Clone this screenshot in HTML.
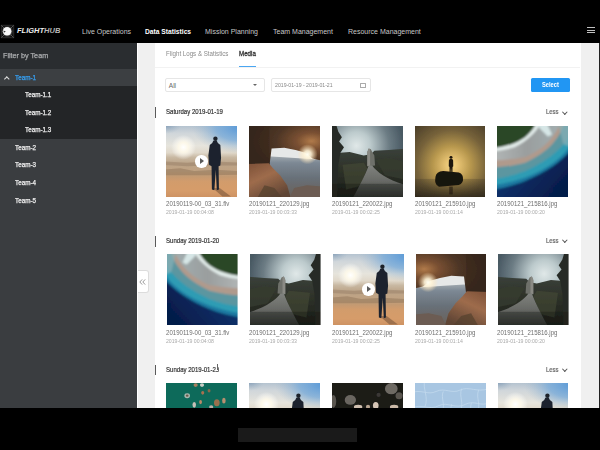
<!DOCTYPE html>
<html><head><meta charset="utf-8">
<style>
*{margin:0;padding:0;box-sizing:border-box}
html,body{width:600px;height:450px;overflow:hidden;background:#000;font-family:"Liberation Sans",sans-serif}
.a{position:absolute;white-space:nowrap}
#hdr{position:absolute;left:0;top:0;width:600px;height:43px;background:#000}
.nav{position:absolute;top:27px;font-size:7px;color:#c8c8c8;line-height:9px;white-space:nowrap}
#side{position:absolute;left:0;top:43px;width:137px;height:365px;background:#3a3d40}
.row{position:absolute;left:0;width:137px;font-size:7px;color:#eeeeee;line-height:17.6px;white-space:nowrap;-webkit-text-stroke:0.25px currentColor}
.sx{display:inline-block;transform-origin:0 50%}
#main{position:absolute;left:137px;top:43px;width:463px;height:365px;background:#f0f0f0;overflow:hidden}
#panel{position:absolute;left:18px;top:0;width:425.6px;height:365px;background:#fff;overflow:hidden}
.th{position:absolute;width:70.6px;height:70.5px;overflow:hidden}
.th svg{position:absolute;left:0;top:0;display:block}
.fn{position:absolute;font-size:6.4px;color:#6e6e6e;line-height:8px;white-space:nowrap;transform:scaleX(.95);transform-origin:0 50%}
.dt{position:absolute;font-size:5.8px;color:#aaa;line-height:7px;white-space:nowrap;transform:scaleX(.89);transform-origin:0 50%}
.sec{position:absolute;font-size:7.3px;color:#333;line-height:8px;white-space:nowrap;-webkit-text-stroke:0.2px #333;transform:scaleX(.83);transform-origin:0 50%}
.bar{position:absolute;left:-0.3px;width:1.3px;height:10.6px;background:#5a5a5a}
.less{position:absolute;left:391px;font-size:6.6px;color:#666;line-height:8px;-webkit-text-stroke:0.2px #666;transform:scaleX(.9);transform-origin:0 50%}
.chev{left:407.6px;width:3.6px;height:3.6px;border-right:1px solid #555;border-bottom:1px solid #555;transform:rotate(45deg)}
.play{position:absolute;left:50%;top:50%;width:12.5px;height:12.5px;margin:-6.25px 0 0 -6.25px;border-radius:50%;background:#fff}
.play:after{content:"";position:absolute;left:5px;top:3.25px;border-left:4.2px solid #5a5a5a;border-top:3px solid transparent;border-bottom:3px solid transparent}
</style></head><body>
<div id="hdr">
  <svg class="a" style="left:0;top:24px" width="15" height="15" viewBox="0 0 15 15"><defs><filter id="lgb" x="-20%" y="-20%" width="140%" height="140%"><feGaussianBlur stdDeviation="0.6"/></filter><radialGradient id="lgg"><stop offset="0" stop-color="#777"/><stop offset=".6" stop-color="#3a3a3a"/><stop offset="1" stop-color="#000" stop-opacity="0"/></radialGradient></defs><g filter="url(#lgb)"><rect x="0" y="0" width="15" height="15" fill="url(#lgg)"/><rect x="1.3" y="1.3" width="12.4" height="12.4" fill="none" stroke="#2e2e2e" stroke-width="1"/><path d="M1.5,1.5 L13.5,13.5 M13.5,1.5 L1.5,13.5" stroke="#666" stroke-width="0.8"/><circle cx="7.1" cy="7.3" r="4.3" fill="#f8f8f8"/><path d="M3.4,6.6 L5.8,7.6 L3.9,8.8 Z" fill="#333"/></g></svg>
  <div class="a" style="left:17px;top:26px;font-size:7.5px;font-style:italic;font-weight:bold;color:#eeeeee;line-height:10px">FLIGHT<span style="color:#b8b8b8">HUB</span></div>
  <div class="nav" style="left:82px">Live Operations</div>
  <div class="nav" style="left:145px;color:#fff;font-weight:bold;font-size:6.7px">Data Statistics</div>
  <div class="nav" style="left:205px">Mission Planning</div>
  <div class="nav" style="left:273px">Team Management</div>
  <div class="nav" style="left:348px">Resource Management</div>
  <div class="a" style="left:586.8px;top:27px;width:8px;height:1px;background:#c0c0c0"></div>
  <div class="a" style="left:586.8px;top:29.7px;width:8px;height:1px;background:#c0c0c0"></div>
  <div class="a" style="left:586.8px;top:32.4px;width:8px;height:1px;background:#c0c0c0"></div>
</div>
<div id="side">
  <div class="row" style="top:0;height:26px;background:#2a2d30;line-height:26px;font-size:7px;color:#a8aaac;padding-left:2.5px"><span class="sx" style="transform:scaleX(1.03)">Filter by Team</span></div>
  <div class="row" style="top:26px;height:17px;background:#3c3f42;line-height:17px;color:#36a0f4;padding-left:15px"><span class="sx" style="transform:scaleX(.9)">Team-1</span></div>
  <div class="a" style="left:4.6px;top:33.6px;width:3.6px;height:3.6px;border-left:1px solid #e0e0e0;border-top:1px solid #e0e0e0;transform:rotate(45deg)"></div>
  <div class="a" style="left:0;top:43px;width:137px;height:53px;background:#232527"></div>
  <div class="row" style="top:43px;padding-left:25px"><span class="sx" style="transform:scaleX(.9)">Team-1.1</span></div>
  <div class="row" style="top:60.6px;padding-left:25px"><span class="sx" style="transform:scaleX(.9)">Team-1.2</span></div>
  <div class="row" style="top:78.2px;padding-left:25px"><span class="sx" style="transform:scaleX(.9)">Team-1.3</span></div>
  <div class="row" style="top:95.8px;padding-left:15px"><span class="sx" style="transform:scaleX(.9)">Team-2</span></div>
  <div class="row" style="top:113.4px;padding-left:15px"><span class="sx" style="transform:scaleX(.9)">Team-3</span></div>
  <div class="row" style="top:131px;padding-left:15px"><span class="sx" style="transform:scaleX(.9)">Team-4</span></div>
  <div class="row" style="top:148.6px;padding-left:15px"><span class="sx" style="transform:scaleX(.9)">Team-5</span></div>
</div>
<div id="main">
  <div class="a" style="left:0;top:0;width:1px;height:365px;background:#fff"></div>
  <div id="panel">
    <div class="a" style="left:10.5px;top:6.8px;font-size:6.5px;color:#8a8a8a;line-height:8px;transform:scaleX(.95);transform-origin:0 50%">Flight Logs &amp; Statistics</div>
    <div class="a" style="left:83.8px;top:6.8px;font-size:6.5px;color:#333;line-height:8px;-webkit-text-stroke:0.3px #333;transform:scaleX(.95);transform-origin:0 50%">Media</div>
    <div class="a" style="left:83.8px;top:23px;width:17px;height:1.5px;background:#4aa6f2"></div>
    <div class="a" style="left:0;top:24.3px;width:425px;height:1px;background:#f2f2f2"></div>
    <div class="a" style="left:10px;top:35.2px;width:99.5px;height:14.3px;border:1px solid #e6e6e6;border-radius:2px"></div>
    <div class="a" style="left:13.8px;top:38.6px;font-size:6.5px;color:#666;line-height:8px">All</div>
    <div class="a" style="left:98px;top:41px;width:0;height:0;border-left:2.6px solid transparent;border-right:2.6px solid transparent;border-top:2.8px solid #666"></div>
    <div class="a" style="left:116px;top:35.2px;width:99.5px;height:14.3px;border:1px solid #e6e6e6;border-radius:2px"></div>
    <div class="a" style="left:120px;top:38.8px;font-size:5.9px;color:#888;line-height:7px;transform:scaleX(.88);transform-origin:0 50%">2019-01-19 - 2019-01-21</div>
    <div class="a" style="left:205.3px;top:40.2px;width:6px;height:5px;border:0.7px solid #aaa;border-top-width:1.3px;border-radius:0.5px"></div>
    <div class="a" style="left:376px;top:35.3px;width:38.7px;height:13.7px;background:#2196f3;border-radius:1.5px;color:#fff;font-weight:bold;font-size:6.4px;line-height:14px;text-align:center"><span class="sx" style="transform:scaleX(.9);transform-origin:50% 50%">Select</span></div>
<div class="bar" style="top:64.2px"></div>
<div class="sec" style="left:11px;top:65.2px">Saturday 2019-01-19</div>
<div class="less" style="top:65.4px">Less</div>
<div class="a chev" style="top:66.5px"></div>
<div class="th" style="left:11px;top:83px"><svg width="70.6" height="70.5" viewBox="0 0 100 100" preserveAspectRatio="none"><defs><filter id="g1f" x="-5%" y="-5%" width="110%" height="110%"><feGaussianBlur stdDeviation="0.45"/></filter></defs><g filter="url(#g1f)">
<defs>
<linearGradient id="g1bg" x1="0" y1="0" x2="0" y2="1">
 <stop offset="0" stop-color="#a8bacb"/>
 <stop offset=".14" stop-color="#d0d6da"/>
 <stop offset=".3" stop-color="#e6e4dc"/>
 <stop offset=".39" stop-color="#e0d8ca"/>
 <stop offset=".45" stop-color="#c8b8a2"/>
 <stop offset=".53" stop-color="#bca488"/>
 <stop offset=".63" stop-color="#c0a282"/>
 <stop offset=".7" stop-color="#c49a72"/>
 <stop offset=".76" stop-color="#d29c6c"/>
 <stop offset=".88" stop-color="#d69c6a"/>
 <stop offset="1" stop-color="#ca8e60"/>
</linearGradient>
<radialGradient id="g1sun" cx=".27" cy=".32" r=".16">
 <stop offset="0" stop-color="#ffffff"/>
 <stop offset=".4" stop-color="#fffaea" stop-opacity=".9"/>
 <stop offset="1" stop-color="#fff" stop-opacity="0"/>
</radialGradient>
<radialGradient id="g1blue" cx="1" cy=".12" r=".62">
 <stop offset="0" stop-color="#5a9ad8"/>
 <stop offset=".5" stop-color="#78aad8" stop-opacity=".8"/>
 <stop offset="1" stop-color="#a0b8cc" stop-opacity="0"/>
</radialGradient>
<radialGradient id="g1cl" cx=".1" cy=".05" r=".35">
 <stop offset="0" stop-color="#7e98b4"/>
 <stop offset="1" stop-color="#a0b4c4" stop-opacity="0"/>
</radialGradient>
</defs>
<rect x="-5" y="-5" width="110" height="110" fill="url(#g1bg)"/>
<rect x="-5" y="-5" width="110" height="60" fill="url(#g1blue)"/>
<rect x="-5" y="-5" width="60" height="40" fill="url(#g1cl)"/>
<rect x="-5" y="-5" width="110" height="110" fill="url(#g1sun)"/>
<path d="M-5,50 L30,52 L60,50 L105,52 L105,56 L60,56 L30,57 L-5,55 Z" fill="#8e765e" opacity=".4"/>
<path d="M-5,62 L20,60 L40,64 L70,62 L105,64 L105,69 L60,70 L-5,70 Z" fill="#8a6e54" opacity=".45"/>
<path d="M66,88 L80,100 L92,100 L76,88 Z" fill="#6a4a34" opacity=".5"/>
<circle cx="70" cy="18" r="3.1" fill="#1e232c"/>
<path d="M67,21 L72,21 L73.5,24 L77,27 L78,45 L77,56 L74.5,57 L75,90 L72,91 L70.5,62 L68.5,91 L65,90 L64.5,57 L61,55 L60,42 L62,27 L65.5,24 Z" fill="#1e242e"/>
</g></svg><div class="play"></div></div>
<div class="th" style="left:94px;top:83px"><svg width="70.6" height="70.5" viewBox="0 0 100 100" preserveAspectRatio="none"><defs><filter id="g2f" x="-5%" y="-5%" width="110%" height="110%"><feGaussianBlur stdDeviation="0.6"/></filter></defs><g filter="url(#g2f)">
<defs>
<radialGradient id="g2rock" cx=".85" cy=".42" r=".75">
 <stop offset="0" stop-color="#b07a4a"/>
 <stop offset=".25" stop-color="#7a5032"/>
 <stop offset=".6" stop-color="#4e3626"/>
 <stop offset="1" stop-color="#38281c"/>
</radialGradient>
<linearGradient id="g2city" x1="0" y1="0" x2="0" y2="1">
 <stop offset="0" stop-color="#a0a8ae"/>
 <stop offset=".15" stop-color="#7c8894"/>
 <stop offset=".5" stop-color="#687078"/>
 <stop offset="1" stop-color="#6a5e54"/>
</linearGradient>
<linearGradient id="g2bl" x1="0" y1="0" x2=".6" y2="1">
 <stop offset="0" stop-color="#7a4e36"/>
 <stop offset=".45" stop-color="#9e6c4c"/>
 <stop offset="1" stop-color="#5e4434"/>
</linearGradient>
<radialGradient id="g2sun" cx=".8" cy=".41" r=".13">
 <stop offset="0" stop-color="#fffef2"/>
 <stop offset=".35" stop-color="#fff4d8" stop-opacity=".9"/>
 <stop offset="1" stop-color="#ffe0b0" stop-opacity="0"/>
</radialGradient>
</defs>
<rect x="-5" y="-5" width="110" height="110" fill="#3e2c20"/>
<path d="M26,28 L105,28 L105,50 L26,46 Z" fill="#e6e8e8"/>
<path d="M26,43 L60,45 L105,48 L105,105 L26,105 Z" fill="url(#g2city)"/>
<path d="M-5,-5 L105,-5 L105,49 L97,48 L90,46 L80,38 L66,34 L50,31 L32,32 L29,56 L-5,58 Z" fill="url(#g2rock)"/>
<path d="M-5,-5 L29,-5 L29,56 L-5,58 Z" fill="#35261c" opacity=".45"/>
<path d="M-5,54 L28,53 L34,60 L44,70 L54,84 L60,105 L-5,105 Z" fill="url(#g2bl)"/>
<path d="M56,105 L64,88 L82,84 L105,86 L105,105 Z" fill="#6c5c52"/>
<path d="M10,105 L22,84 L36,88 L50,105 Z" fill="#54402e" opacity=".7"/>
<rect x="-5" y="-5" width="110" height="110" fill="url(#g2sun)"/>
</g></svg></div>
<div class="th" style="left:177px;top:83px"><svg width="70.6" height="70.5" viewBox="0 0 100 100" preserveAspectRatio="none"><defs><filter id="g3f" x="-5%" y="-5%" width="110%" height="110%"><feGaussianBlur stdDeviation="0.6"/></filter></defs><g filter="url(#g3f)">
<defs>
<radialGradient id="g3sky" cx=".36" cy=".3" r=".6">
 <stop offset="0" stop-color="#e0e8e8"/>
 <stop offset=".3" stop-color="#bccacc"/>
 <stop offset=".7" stop-color="#6c7c84"/>
 <stop offset="1" stop-color="#4a5a64"/>
</radialGradient>
<linearGradient id="g3land" x1="0" y1="0" x2="0" y2="1">
 <stop offset="0" stop-color="#3a403a"/>
 <stop offset=".4" stop-color="#2e3229"/>
 <stop offset="1" stop-color="#1a1c18"/>
</linearGradient>
<linearGradient id="g3road" x1="0" y1="0" x2="0" y2="1">
 <stop offset="0" stop-color="#80827e"/>
 <stop offset=".45" stop-color="#686a66"/>
 <stop offset="1" stop-color="#2e302e"/>
</linearGradient>
</defs>
<rect x="-5" y="-5" width="110" height="110" fill="url(#g3sky)"/>
<path d="M-5,40 L12,38 L25,37 L45,42 L55,40 L60,35 L80,34 L105,32 L105,105 L-5,105 Z" fill="url(#g3land)"/>
<path d="M15,55 L45,52 L50,60 L40,85 L20,90 Z" fill="#4a5038" opacity=".5"/>
<path d="M62,48 L80,45 L100,50 L100,75 L75,70 Z" fill="#363c30" opacity=".8"/>
<path d="M50,37 L52,32 L55,33 L57,37 L60,42 L61,56 L50,57 Z" fill="#6e706a"/><path d="M50,37 L52,32 L54,33 L54,56 L50,57 Z" fill="#8a8a84"/>
<path d="M52,56 L57,56 C63,65 78,76 105,84 L105,105 L28,105 C36,90 46,72 52,56 Z" fill="url(#g3road)"/>
<path d="M-5,-5 L5,-5 L9,8 L14,16 L10,22 L17,30 L12,38 L9,55 L7,105 L-5,105 Z" fill="#282c26"/>
<rect x="-5" y="82" width="110" height="24" fill="#141612" opacity=".35"/>
</g></svg></div>
<div class="th" style="left:259.6px;top:83px"><svg width="70.6" height="70.5" viewBox="0 0 100 100" preserveAspectRatio="none"><defs><filter id="g4f" x="-5%" y="-5%" width="110%" height="110%"><feGaussianBlur stdDeviation="0.55"/></filter></defs><g filter="url(#g4f)">
<defs>
<radialGradient id="g4glow" cx=".52" cy=".55" r=".75">
 <stop offset="0" stop-color="#f6d888"/>
 <stop offset=".12" stop-color="#e4c070"/>
 <stop offset=".32" stop-color="#b8984e"/>
 <stop offset=".6" stop-color="#76623a"/>
 <stop offset="1" stop-color="#3e3424"/>
</radialGradient>
<linearGradient id="g4water" x1="0" y1="0" x2="0" y2="1">
 <stop offset="0" stop-color="#3a3222" stop-opacity=".25"/>
 <stop offset="1" stop-color="#221e16" stop-opacity=".9"/>
</linearGradient>
</defs>
<rect x="-5" y="-5" width="110" height="110" fill="url(#g4glow)"/>
<rect x="-5" y="75" width="110" height="31" fill="url(#g4water)"/>
<circle cx="51" cy="44.5" r="2.1" fill="#1c160e"/>
<path d="M49.3,46.5 L52.7,46.5 L54,49 L54.2,57 L53.2,58 L53,67 L51.6,67 L51,59 L50.4,67 L49,67 L48.8,58 L47.8,57 L48,49 Z" fill="#1c160e"/>
<path d="M29,72 Q30,65 40,64 L62,66 Q69,68 68,77 Q67,84 58,84 L34,86 Q27,84 29,72 Z" fill="#19130c"/>
<rect x="48.5" y="86" width="5" height="11" fill="#19130c" opacity=".55"/>
</g></svg></div>
<div class="th" style="left:342.2px;top:83px"><svg width="70.6" height="70.5" viewBox="0 0 100 100" preserveAspectRatio="none"><defs><filter id="g5f" x="-5%" y="-5%" width="110%" height="110%"><feGaussianBlur stdDeviation="1.4"/></filter></defs><g filter="url(#g5f)">
<defs>
<linearGradient id="g5sea" x1="0" y1=".3" x2=".8" y2="1">
 <stop offset="0" stop-color="#10488a"/>
 <stop offset=".4" stop-color="#0a3068"/>
 <stop offset="1" stop-color="#061a48"/>
</linearGradient>
<linearGradient id="g5rk" x1="0" y1="0" x2="1" y2="0">
 <stop offset="0" stop-color="#b2b6b6"/>
 <stop offset=".5" stop-color="#9a9e9e"/>
 <stop offset="1" stop-color="#a2aeb0"/>
</linearGradient>
</defs>
<rect x="-5" y="-5" width="110" height="110" fill="url(#g5sea)"/>
<path d="M-5,-5 L105,-5 L105,34 C92,50 70,66 40,78 C25,84 10,88 -5,90 Z" fill="#1a78a0"/>
<path d="M-5,-5 L105,-5 L105,26 C94,44 74,60 40,73 C25,78 10,82 -5,84 Z" fill="#2e9cb4"/>
<path d="M-5,-5 L105,-5 L105,8 C96,28 78,46 40,64 C25,70 10,73 -5,75 Z" fill="#5c96a0"/>
<path d="M-5,-5 L95,-5 C90,15 75,36 40,52 C25,56 10,58 -5,59 Z" fill="#b09a8c"/>
<path d="M-5,-5 L89,-5 C85,10 72,30 40,44 C25,47 10,48 -5,49 Z" fill="url(#g5rk)"/>
<path d="M-5,-5 L63,-5 C56,8 45,20 25,30 C15,33 5,35 -5,36 Z" fill="#e2ecea"/>
<path d="M-5,-5 L56,-5 C50,8 40,18 25,24 C15,28 5,30 -5,31 Z" fill="#2c4628"/>
<path d="M56,-5 L70,-5 L78,12 L72,15 L61,4 Z" fill="#d6e6e6"/>
<path d="M86,-5 L105,-5 L105,30 L94,26 Z" fill="#8ab0b6" opacity=".7"/>
</g></svg></div>
<div class="fn" style="left:11px;top:156.7px">20190119-00_03_31.flv</div>
<div class="dt" style="left:11px;top:165.7px">2019-01-19 00:04:08</div>
<div class="fn" style="left:94px;top:156.7px">20190121_220129.jpg</div>
<div class="dt" style="left:94px;top:165.7px">2019-01-19 00:03:33</div>
<div class="fn" style="left:177px;top:156.7px">20190121_220022.jpg</div>
<div class="dt" style="left:177px;top:165.7px">2019-01-19 00:02:25</div>
<div class="fn" style="left:259.6px;top:156.7px">20190121_215910.jpg</div>
<div class="dt" style="left:259.6px;top:165.7px">2019-01-19 00:01:14</div>
<div class="fn" style="left:342.2px;top:156.7px">20190121_215816.jpg</div>
<div class="dt" style="left:342.2px;top:165.7px">2019-01-19 00:00:20</div>
<div class="bar" style="top:193px"></div>
<div class="sec" style="left:11px;top:194px">Sunday 2019-01-20</div>
<div class="less" style="top:194.2px">Less</div>
<div class="a chev" style="top:195.3px"></div>
<div class="th" style="left:12px;top:211px"><svg width="70.6" height="70.5" viewBox="0 0 100 100" preserveAspectRatio="none" style="transform:scaleX(-1)"><defs><filter id="g6f" x="-5%" y="-5%" width="110%" height="110%"><feGaussianBlur stdDeviation="1.4"/></filter></defs><g filter="url(#g6f)">
<defs>
<linearGradient id="g6sea" x1="0" y1=".3" x2=".8" y2="1">
 <stop offset="0" stop-color="#10488a"/>
 <stop offset=".4" stop-color="#0a3068"/>
 <stop offset="1" stop-color="#061a48"/>
</linearGradient>
<linearGradient id="g6rk" x1="0" y1="0" x2="1" y2="0">
 <stop offset="0" stop-color="#b2b6b6"/>
 <stop offset=".5" stop-color="#9a9e9e"/>
 <stop offset="1" stop-color="#a2aeb0"/>
</linearGradient>
</defs>
<rect x="-5" y="-5" width="110" height="110" fill="url(#g6sea)"/>
<path d="M-5,-5 L105,-5 L105,34 C92,50 70,66 40,78 C25,84 10,88 -5,90 Z" fill="#1a78a0"/>
<path d="M-5,-5 L105,-5 L105,26 C94,44 74,60 40,73 C25,78 10,82 -5,84 Z" fill="#2e9cb4"/>
<path d="M-5,-5 L105,-5 L105,8 C96,28 78,46 40,64 C25,70 10,73 -5,75 Z" fill="#5c96a0"/>
<path d="M-5,-5 L95,-5 C90,15 75,36 40,52 C25,56 10,58 -5,59 Z" fill="#b09a8c"/>
<path d="M-5,-5 L89,-5 C85,10 72,30 40,44 C25,47 10,48 -5,49 Z" fill="url(#g6rk)"/>
<path d="M-5,-5 L63,-5 C56,8 45,20 25,30 C15,33 5,35 -5,36 Z" fill="#e2ecea"/>
<path d="M-5,-5 L56,-5 C50,8 40,18 25,24 C15,28 5,30 -5,31 Z" fill="#2c4628"/>
<path d="M56,-5 L70,-5 L78,12 L72,15 L61,4 Z" fill="#d6e6e6"/>
<path d="M86,-5 L105,-5 L105,30 L94,26 Z" fill="#8ab0b6" opacity=".7"/>
</g></svg></div>
<div class="th" style="left:95px;top:211px"><svg width="70.6" height="70.5" viewBox="0 0 100 100" preserveAspectRatio="none" style="transform:scaleX(-1)"><defs><filter id="g7f" x="-5%" y="-5%" width="110%" height="110%"><feGaussianBlur stdDeviation="0.6"/></filter></defs><g filter="url(#g7f)">
<defs>
<radialGradient id="g7sky" cx=".36" cy=".3" r=".6">
 <stop offset="0" stop-color="#e0e8e8"/>
 <stop offset=".3" stop-color="#bccacc"/>
 <stop offset=".7" stop-color="#6c7c84"/>
 <stop offset="1" stop-color="#4a5a64"/>
</radialGradient>
<linearGradient id="g7land" x1="0" y1="0" x2="0" y2="1">
 <stop offset="0" stop-color="#3a403a"/>
 <stop offset=".4" stop-color="#2e3229"/>
 <stop offset="1" stop-color="#1a1c18"/>
</linearGradient>
<linearGradient id="g7road" x1="0" y1="0" x2="0" y2="1">
 <stop offset="0" stop-color="#80827e"/>
 <stop offset=".45" stop-color="#686a66"/>
 <stop offset="1" stop-color="#2e302e"/>
</linearGradient>
</defs>
<rect x="-5" y="-5" width="110" height="110" fill="url(#g7sky)"/>
<path d="M-5,40 L12,38 L25,37 L45,42 L55,40 L60,35 L80,34 L105,32 L105,105 L-5,105 Z" fill="url(#g7land)"/>
<path d="M15,55 L45,52 L50,60 L40,85 L20,90 Z" fill="#4a5038" opacity=".5"/>
<path d="M62,48 L80,45 L100,50 L100,75 L75,70 Z" fill="#363c30" opacity=".8"/>
<path d="M50,37 L52,32 L55,33 L57,37 L60,42 L61,56 L50,57 Z" fill="#6e706a"/><path d="M50,37 L52,32 L54,33 L54,56 L50,57 Z" fill="#8a8a84"/>
<path d="M52,56 L57,56 C63,65 78,76 105,84 L105,105 L28,105 C36,90 46,72 52,56 Z" fill="url(#g7road)"/>
<path d="M-5,-5 L5,-5 L9,8 L14,16 L10,22 L17,30 L12,38 L9,55 L7,105 L-5,105 Z" fill="#282c26"/>
<rect x="-5" y="82" width="110" height="24" fill="#141612" opacity=".35"/>
</g></svg></div>
<div class="th" style="left:178px;top:211px"><svg width="70.6" height="70.5" viewBox="0 0 100 100" preserveAspectRatio="none"><defs><filter id="g8f" x="-5%" y="-5%" width="110%" height="110%"><feGaussianBlur stdDeviation="0.45"/></filter></defs><g filter="url(#g8f)">
<defs>
<linearGradient id="g8bg" x1="0" y1="0" x2="0" y2="1">
 <stop offset="0" stop-color="#a8bacb"/>
 <stop offset=".14" stop-color="#d0d6da"/>
 <stop offset=".3" stop-color="#e6e4dc"/>
 <stop offset=".39" stop-color="#e0d8ca"/>
 <stop offset=".45" stop-color="#c8b8a2"/>
 <stop offset=".53" stop-color="#bca488"/>
 <stop offset=".63" stop-color="#c0a282"/>
 <stop offset=".7" stop-color="#c49a72"/>
 <stop offset=".76" stop-color="#d29c6c"/>
 <stop offset=".88" stop-color="#d69c6a"/>
 <stop offset="1" stop-color="#ca8e60"/>
</linearGradient>
<radialGradient id="g8sun" cx=".27" cy=".32" r=".16">
 <stop offset="0" stop-color="#ffffff"/>
 <stop offset=".4" stop-color="#fffaea" stop-opacity=".9"/>
 <stop offset="1" stop-color="#fff" stop-opacity="0"/>
</radialGradient>
<radialGradient id="g8blue" cx="1" cy=".12" r=".62">
 <stop offset="0" stop-color="#5a9ad8"/>
 <stop offset=".5" stop-color="#78aad8" stop-opacity=".8"/>
 <stop offset="1" stop-color="#a0b8cc" stop-opacity="0"/>
</radialGradient>
<radialGradient id="g8cl" cx=".1" cy=".05" r=".35">
 <stop offset="0" stop-color="#7e98b4"/>
 <stop offset="1" stop-color="#a0b4c4" stop-opacity="0"/>
</radialGradient>
</defs>
<rect x="-5" y="-5" width="110" height="110" fill="url(#g8bg)"/>
<rect x="-5" y="-5" width="110" height="60" fill="url(#g8blue)"/>
<rect x="-5" y="-5" width="60" height="40" fill="url(#g8cl)"/>
<rect x="-5" y="-5" width="110" height="110" fill="url(#g8sun)"/>
<path d="M-5,50 L30,52 L60,50 L105,52 L105,56 L60,56 L30,57 L-5,55 Z" fill="#8e765e" opacity=".4"/>
<path d="M-5,62 L20,60 L40,64 L70,62 L105,64 L105,69 L60,70 L-5,70 Z" fill="#8a6e54" opacity=".45"/>
<path d="M66,88 L80,100 L92,100 L76,88 Z" fill="#6a4a34" opacity=".5"/>
<circle cx="70" cy="18" r="3.1" fill="#1e232c"/>
<path d="M67,21 L72,21 L73.5,24 L77,27 L78,45 L77,56 L74.5,57 L75,90 L72,91 L70.5,62 L68.5,91 L65,90 L64.5,57 L61,55 L60,42 L62,27 L65.5,24 Z" fill="#1e242e"/>
</g></svg><div class="play"></div></div>
<div class="th" style="left:260.6px;top:211px"><svg width="70.6" height="70.5" viewBox="0 0 100 100" preserveAspectRatio="none" style="transform:scaleX(-1)"><defs><filter id="g9f" x="-5%" y="-5%" width="110%" height="110%"><feGaussianBlur stdDeviation="0.6"/></filter></defs><g filter="url(#g9f)">
<defs>
<radialGradient id="g9rock" cx=".85" cy=".42" r=".75">
 <stop offset="0" stop-color="#b07a4a"/>
 <stop offset=".25" stop-color="#7a5032"/>
 <stop offset=".6" stop-color="#4e3626"/>
 <stop offset="1" stop-color="#38281c"/>
</radialGradient>
<linearGradient id="g9city" x1="0" y1="0" x2="0" y2="1">
 <stop offset="0" stop-color="#a0a8ae"/>
 <stop offset=".15" stop-color="#7c8894"/>
 <stop offset=".5" stop-color="#687078"/>
 <stop offset="1" stop-color="#6a5e54"/>
</linearGradient>
<linearGradient id="g9bl" x1="0" y1="0" x2=".6" y2="1">
 <stop offset="0" stop-color="#7a4e36"/>
 <stop offset=".45" stop-color="#9e6c4c"/>
 <stop offset="1" stop-color="#5e4434"/>
</linearGradient>
<radialGradient id="g9sun" cx=".8" cy=".41" r=".13">
 <stop offset="0" stop-color="#fffef2"/>
 <stop offset=".35" stop-color="#fff4d8" stop-opacity=".9"/>
 <stop offset="1" stop-color="#ffe0b0" stop-opacity="0"/>
</radialGradient>
</defs>
<rect x="-5" y="-5" width="110" height="110" fill="#3e2c20"/>
<path d="M26,28 L105,28 L105,50 L26,46 Z" fill="#e6e8e8"/>
<path d="M26,43 L60,45 L105,48 L105,105 L26,105 Z" fill="url(#g9city)"/>
<path d="M-5,-5 L105,-5 L105,49 L97,48 L90,46 L80,38 L66,34 L50,31 L32,32 L29,56 L-5,58 Z" fill="url(#g9rock)"/>
<path d="M-5,-5 L29,-5 L29,56 L-5,58 Z" fill="#35261c" opacity=".45"/>
<path d="M-5,54 L28,53 L34,60 L44,70 L54,84 L60,105 L-5,105 Z" fill="url(#g9bl)"/>
<path d="M56,105 L64,88 L82,84 L105,86 L105,105 Z" fill="#6c5c52"/>
<path d="M10,105 L22,84 L36,88 L50,105 Z" fill="#54402e" opacity=".7"/>
<rect x="-5" y="-5" width="110" height="110" fill="url(#g9sun)"/>
</g></svg></div>
<div class="th" style="left:343.2px;top:211px"><svg width="70.6" height="70.5" viewBox="0 0 100 100" preserveAspectRatio="none" style="transform:scaleX(-1)"><defs><filter id="g10f" x="-5%" y="-5%" width="110%" height="110%"><feGaussianBlur stdDeviation="0.6"/></filter></defs><g filter="url(#g10f)">
<defs>
<radialGradient id="g10sky" cx=".36" cy=".3" r=".6">
 <stop offset="0" stop-color="#e0e8e8"/>
 <stop offset=".3" stop-color="#bccacc"/>
 <stop offset=".7" stop-color="#6c7c84"/>
 <stop offset="1" stop-color="#4a5a64"/>
</radialGradient>
<linearGradient id="g10land" x1="0" y1="0" x2="0" y2="1">
 <stop offset="0" stop-color="#3a403a"/>
 <stop offset=".4" stop-color="#2e3229"/>
 <stop offset="1" stop-color="#1a1c18"/>
</linearGradient>
<linearGradient id="g10road" x1="0" y1="0" x2="0" y2="1">
 <stop offset="0" stop-color="#80827e"/>
 <stop offset=".45" stop-color="#686a66"/>
 <stop offset="1" stop-color="#2e302e"/>
</linearGradient>
</defs>
<rect x="-5" y="-5" width="110" height="110" fill="url(#g10sky)"/>
<path d="M-5,40 L12,38 L25,37 L45,42 L55,40 L60,35 L80,34 L105,32 L105,105 L-5,105 Z" fill="url(#g10land)"/>
<path d="M15,55 L45,52 L50,60 L40,85 L20,90 Z" fill="#4a5038" opacity=".5"/>
<path d="M62,48 L80,45 L100,50 L100,75 L75,70 Z" fill="#363c30" opacity=".8"/>
<path d="M50,37 L52,32 L55,33 L57,37 L60,42 L61,56 L50,57 Z" fill="#6e706a"/><path d="M50,37 L52,32 L54,33 L54,56 L50,57 Z" fill="#8a8a84"/>
<path d="M52,56 L57,56 C63,65 78,76 105,84 L105,105 L28,105 C36,90 46,72 52,56 Z" fill="url(#g10road)"/>
<path d="M-5,-5 L5,-5 L9,8 L14,16 L10,22 L17,30 L12,38 L9,55 L7,105 L-5,105 Z" fill="#282c26"/>
<rect x="-5" y="82" width="110" height="24" fill="#141612" opacity=".35"/>
</g></svg></div>
<div class="fn" style="left:11px;top:285.5px">20190119-00_03_31.flv</div>
<div class="dt" style="left:11px;top:294.5px">2019-01-19 00:04:08</div>
<div class="fn" style="left:94px;top:285.5px">20190121_220129.jpg</div>
<div class="dt" style="left:94px;top:294.5px">2019-01-19 00:03:33</div>
<div class="fn" style="left:177px;top:285.5px">20190121_220022.jpg</div>
<div class="dt" style="left:177px;top:294.5px">2019-01-19 00:02:25</div>
<div class="fn" style="left:259.6px;top:285.5px">20190121_215910.jpg</div>
<div class="dt" style="left:259.6px;top:294.5px">2019-01-19 00:01:14</div>
<div class="fn" style="left:342.2px;top:285.5px">20190121_215816.jpg</div>
<div class="dt" style="left:342.2px;top:294.5px">2019-01-19 00:00:20</div>
<div class="bar" style="top:321.7px"></div>
<div class="sec" style="left:11px;top:322.7px">Sunday 2019-01-20</div>
<div class="less" style="top:322.9px">Less</div>
<div class="a chev" style="top:324.0px"></div>
<div class="th" style="left:11.4px;top:340.4px"><svg width="70.6" height="70.5" viewBox="0 0 100 100" preserveAspectRatio="none"><defs><filter id="g11f" x="-5%" y="-5%" width="110%" height="110%"><feGaussianBlur stdDeviation="0.9"/></filter></defs><g filter="url(#g11f)">
<rect x="-5" y="-5" width="110" height="110" fill="#0f6a5a"/>
<ellipse cx="42" cy="3" rx="3" ry="2.5" fill="#a88060"/>
<ellipse cx="51" cy="3" rx="3" ry="2.5" fill="#c8ccc4"/>
<ellipse cx="30" cy="18" rx="4" ry="3.5" fill="#a8b8b0"/>
<ellipse cx="30" cy="18" rx="2" ry="1.6" fill="#6a5a48"/>
<ellipse cx="52" cy="14" rx="2.2" ry="2.5" fill="#a87050"/>
<ellipse cx="61" cy="11" rx="2" ry="2.5" fill="#8a6848"/>
<ellipse cx="49" cy="27" rx="2" ry="3" fill="#b88868"/>
<ellipse cx="40" cy="31" rx="2.5" ry="4" fill="#c8c0b8"/>
<ellipse cx="72" cy="28" rx="4" ry="5" fill="#98704e"/>
<ellipse cx="82" cy="25" rx="2.5" ry="4" fill="#b89070"/>
<ellipse cx="64" cy="34" rx="3" ry="2.5" fill="#b8b0a8"/>
</g></svg></div>
<div class="th" style="left:94.4px;top:340.4px"><svg width="70.6" height="70.5" viewBox="0 0 100 100" preserveAspectRatio="none"><defs><filter id="g12f" x="-5%" y="-5%" width="110%" height="110%"><feGaussianBlur stdDeviation="0.45"/></filter></defs><g filter="url(#g12f)">
<defs>
<linearGradient id="g12bg" x1="0" y1="0" x2="0" y2="1">
 <stop offset="0" stop-color="#a8bacb"/>
 <stop offset=".14" stop-color="#d0d6da"/>
 <stop offset=".3" stop-color="#e6e4dc"/>
 <stop offset=".39" stop-color="#e0d8ca"/>
 <stop offset=".45" stop-color="#c8b8a2"/>
 <stop offset=".53" stop-color="#bca488"/>
 <stop offset=".63" stop-color="#c0a282"/>
 <stop offset=".7" stop-color="#c49a72"/>
 <stop offset=".76" stop-color="#d29c6c"/>
 <stop offset=".88" stop-color="#d69c6a"/>
 <stop offset="1" stop-color="#ca8e60"/>
</linearGradient>
<radialGradient id="g12sun" cx=".27" cy=".32" r=".16">
 <stop offset="0" stop-color="#ffffff"/>
 <stop offset=".4" stop-color="#fffaea" stop-opacity=".9"/>
 <stop offset="1" stop-color="#fff" stop-opacity="0"/>
</radialGradient>
<radialGradient id="g12blue" cx="1" cy=".12" r=".62">
 <stop offset="0" stop-color="#5a9ad8"/>
 <stop offset=".5" stop-color="#78aad8" stop-opacity=".8"/>
 <stop offset="1" stop-color="#a0b8cc" stop-opacity="0"/>
</radialGradient>
<radialGradient id="g12cl" cx=".1" cy=".05" r=".35">
 <stop offset="0" stop-color="#7e98b4"/>
 <stop offset="1" stop-color="#a0b4c4" stop-opacity="0"/>
</radialGradient>
</defs>
<rect x="-5" y="-5" width="110" height="110" fill="url(#g12bg)"/>
<rect x="-5" y="-5" width="110" height="60" fill="url(#g12blue)"/>
<rect x="-5" y="-5" width="60" height="40" fill="url(#g12cl)"/>
<rect x="-5" y="-5" width="110" height="110" fill="url(#g12sun)"/>
<path d="M-5,50 L30,52 L60,50 L105,52 L105,56 L60,56 L30,57 L-5,55 Z" fill="#8e765e" opacity=".4"/>
<path d="M-5,62 L20,60 L40,64 L70,62 L105,64 L105,69 L60,70 L-5,70 Z" fill="#8a6e54" opacity=".45"/>
<path d="M66,88 L80,100 L92,100 L76,88 Z" fill="#6a4a34" opacity=".5"/>
<circle cx="70" cy="18" r="3.1" fill="#1e232c"/>
<path d="M67,21 L72,21 L73.5,24 L77,27 L78,45 L77,56 L74.5,57 L75,90 L72,91 L70.5,62 L68.5,91 L65,90 L64.5,57 L61,55 L60,42 L62,27 L65.5,24 Z" fill="#1e242e"/>
</g></svg></div>
<div class="th" style="left:177.4px;top:340.4px"><svg width="70.6" height="70.5" viewBox="0 0 100 100" preserveAspectRatio="none"><defs><filter id="g13f" x="-5%" y="-5%" width="110%" height="110%"><feGaussianBlur stdDeviation="1.1"/></filter></defs><g filter="url(#g13f)">
<rect x="-5" y="-5" width="110" height="110" fill="#1a1a18"/>
<ellipse cx="2" cy="26" rx="4" ry="9" fill="#5a5650"/>
<ellipse cx="26" cy="24" rx="8" ry="7" fill="#6a6660"/>
<ellipse cx="84" cy="8" rx="9" ry="8" fill="#6e6a64"/>
<ellipse cx="95" cy="18" rx="5" ry="5" fill="#5a5650"/>
<ellipse cx="66" cy="17" rx="3" ry="3" fill="#3a3834"/>
<ellipse cx="37" cy="34" rx="6" ry="3" fill="#d0c0b0"/>
<ellipse cx="51" cy="34" rx="3" ry="3" fill="#b8a490"/>
<ellipse cx="62" cy="32" rx="4" ry="5" fill="#d6c6b6"/>
<ellipse cx="88" cy="34" rx="6" ry="3" fill="#ccbaa8"/>
</g></svg></div>
<div class="th" style="left:260.0px;top:340.4px"><svg width="70.6" height="70.5" viewBox="0 0 100 100" preserveAspectRatio="none"><defs><filter id="g14f" x="-5%" y="-5%" width="110%" height="110%"><feGaussianBlur stdDeviation="0.5"/></filter></defs><g filter="url(#g14f)">
<rect x="-5" y="-5" width="110" height="110" fill="#a8c6e2"/>
<g fill="none" stroke="#d4e6f4" stroke-width="1.1" opacity=".6">
<path d="M-5,14 C8,8 18,18 30,12 C42,6 52,16 64,10 C76,4 88,14 105,8"/>
<path d="M-5,36 C10,28 20,40 34,32 C46,26 58,38 72,30 C84,24 94,34 105,28"/>
<path d="M-5,58 C8,50 22,62 36,54 C50,46 60,58 74,50 C86,44 96,54 105,48"/>
<path d="M-5,80 C10,72 20,84 34,76 C48,68 58,80 72,72 C84,66 94,76 105,70"/>
<path d="M14,-5 C10,8 20,20 14,34 M40,12 C36,22 44,30 38,44 M66,8 C62,20 70,28 64,40 M90,10 C86,22 94,30 88,42 M22,34 C18,46 26,52 20,64 M52,30 C48,42 56,50 50,62 M80,28 C76,40 84,48 78,60 M10,60 C6,70 14,78 8,88 M38,56 C34,66 42,74 36,84 M64,52 C60,62 68,70 62,80 M92,50 C88,60 96,68 90,78"/>
</g>
</g></svg></div>
<div class="th" style="left:342.6px;top:340.4px"><svg width="70.6" height="70.5" viewBox="0 0 100 100" preserveAspectRatio="none"><defs><filter id="g15f" x="-5%" y="-5%" width="110%" height="110%"><feGaussianBlur stdDeviation="0.45"/></filter></defs><g filter="url(#g15f)">
<defs>
<linearGradient id="g15bg" x1="0" y1="0" x2="0" y2="1">
 <stop offset="0" stop-color="#a8bacb"/>
 <stop offset=".14" stop-color="#d0d6da"/>
 <stop offset=".3" stop-color="#e6e4dc"/>
 <stop offset=".39" stop-color="#e0d8ca"/>
 <stop offset=".45" stop-color="#c8b8a2"/>
 <stop offset=".53" stop-color="#bca488"/>
 <stop offset=".63" stop-color="#c0a282"/>
 <stop offset=".7" stop-color="#c49a72"/>
 <stop offset=".76" stop-color="#d29c6c"/>
 <stop offset=".88" stop-color="#d69c6a"/>
 <stop offset="1" stop-color="#ca8e60"/>
</linearGradient>
<radialGradient id="g15sun" cx=".27" cy=".32" r=".16">
 <stop offset="0" stop-color="#ffffff"/>
 <stop offset=".4" stop-color="#fffaea" stop-opacity=".9"/>
 <stop offset="1" stop-color="#fff" stop-opacity="0"/>
</radialGradient>
<radialGradient id="g15blue" cx="1" cy=".12" r=".62">
 <stop offset="0" stop-color="#5a9ad8"/>
 <stop offset=".5" stop-color="#78aad8" stop-opacity=".8"/>
 <stop offset="1" stop-color="#a0b8cc" stop-opacity="0"/>
</radialGradient>
<radialGradient id="g15cl" cx=".1" cy=".05" r=".35">
 <stop offset="0" stop-color="#7e98b4"/>
 <stop offset="1" stop-color="#a0b4c4" stop-opacity="0"/>
</radialGradient>
</defs>
<rect x="-5" y="-5" width="110" height="110" fill="url(#g15bg)"/>
<rect x="-5" y="-5" width="110" height="60" fill="url(#g15blue)"/>
<rect x="-5" y="-5" width="60" height="40" fill="url(#g15cl)"/>
<rect x="-5" y="-5" width="110" height="110" fill="url(#g15sun)"/>
<path d="M-5,50 L30,52 L60,50 L105,52 L105,56 L60,56 L30,57 L-5,55 Z" fill="#8e765e" opacity=".4"/>
<path d="M-5,62 L20,60 L40,64 L70,62 L105,64 L105,69 L60,70 L-5,70 Z" fill="#8a6e54" opacity=".45"/>
<path d="M66,88 L80,100 L92,100 L76,88 Z" fill="#6a4a34" opacity=".5"/>
<circle cx="70" cy="18" r="3.1" fill="#1e232c"/>
<path d="M67,21 L72,21 L73.5,24 L77,27 L78,45 L77,56 L74.5,57 L75,90 L72,91 L70.5,62 L68.5,91 L65,90 L64.5,57 L61,55 L60,42 L62,27 L65.5,24 Z" fill="#1e242e"/>
</g></svg></div>
<div class="a" style="left:60.8px;top:323.5px;width:1px;height:4px;background:#fff"></div><div class="a" style="left:62.2px;top:321px;width:0.8px;height:5.5px;background:#666"></div>
  </div>
  <div class="a" style="left:1px;top:226.8px;width:11.2px;height:23px;background:#fff;border:1px solid #dcdcdc;border-left:none;border-radius:0 3px 3px 0"></div>
  <svg class="a" style="left:2px;top:235.5px" width="7" height="6" viewBox="0 0 7 6"><path d="M3.2,0.4 L0.8,3 L3.2,5.6 M6.2,0.4 L3.8,3 L6.2,5.6" fill="none" stroke="#9a9a9a" stroke-width="1"/></svg>
  <div class="a" style="left:462px;top:0;width:1px;height:365px;background:#222"></div>
</div>
<div class="a" style="left:238px;top:428px;width:119px;height:13.5px;background:#1a1a1a"></div>
</body></html>
